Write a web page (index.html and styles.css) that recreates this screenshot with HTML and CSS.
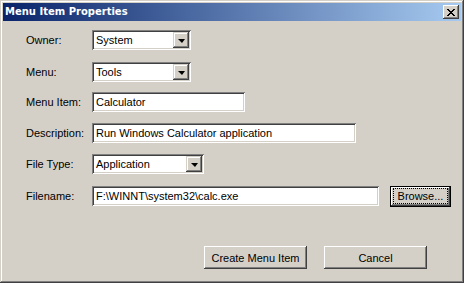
FILE: index.html
```html
<!DOCTYPE html>
<html>
<head>
	<title>Menu Item Properties</title>
	<meta charset=utf-8>
	<link rel="stylesheet" href="styles.css">
</head>
<body>
	<div class="dialog">
		<div class="titlebar">
			<span class="title">Menu Item Properties</span>
			<span class="close">
				<svg width="8" height="7" viewBox="0 0 8 7" shape-rendering="crispEdges">
					<path d="M0 0h2v1h-2zM6 0h2v1h-2zM1 1h2v1h-2zM5 1h2v1h-2zM2 2h4v1h-4zM3 3h2v1h-2zM2 4h4v1h-4zM1 5h2v1h-2zM5 5h2v1h-2zM0 6h2v1h-2zM6 6h2v1h-2z" fill="#000"/>
				</svg>
			</span>
		</div>

		<div class="form">
			<div class="row">
				<span class="label">Owner:</span>
				<div class="combo combo-owner">
					<span class="field-text">System</span>
					<span class="combo-btn"><span class="arrow"></span></span>
				</div>
			</div>
			<div class="row row-wide">
				<span class="label">Menu:</span>
				<div class="combo combo-owner">
					<span class="field-text">Tools</span>
					<span class="combo-btn"><span class="arrow"></span></span>
				</div>
			</div>
			<div class="row row-tight">
				<span class="label">Menu Item:</span>
				<div class="edit edit-item"><span class="field-text">Calculator</span></div>
			</div>
			<div class="row">
				<span class="label">Description:</span>
				<div class="edit edit-desc"><span class="field-text">Run Windows Calculator application</span></div>
			</div>
			<div class="row">
				<span class="label">File Type:</span>
				<div class="combo combo-type">
					<span class="field-text">Application</span>
					<span class="combo-btn"><span class="arrow"></span></span>
				</div>
			</div>
			<div class="row row-wide">
				<span class="label">Filename:</span>
				<div class="edit edit-file"><span class="field-text">F:\WINNT\system32\calc.exe</span></div>
				<span class="btn btn-default"><span class="focus">Browse...</span></span>
			</div>
		</div>

		<div class="actions">
			<span class="btn btn-wide">Create Menu Item</span>
			<span class="btn btn-wide">Cancel</span>
		</div>
	</div>
</body>
</html>
```

FILE: styles.css
```css
	body{
		margin: 0;
		font-family: "Liberation Sans", Arial, sans-serif;
		font-size: 11px;
		color: #000;
		background: #d4d0c8;
	}
	.dialog{
		width: 464px;
		height: 283px;
		box-sizing: border-box;
		padding: 3px;
		background: #d4d0c8;
		box-shadow: inset -1px -1px #404040, inset 1px 1px #d4d0c8,
			inset -2px -2px #808080, inset 2px 2px #fff;
	}
	.titlebar{
		height: 18px;
		display: flex;
		align-items: flex-start;
		justify-content: space-between;
		background: linear-gradient(to right, #0a246a, #a6caf0);
	}
	.title{
		color: #fff;
		font-family: "DejaVu Sans", Verdana, sans-serif;
		font-weight: bold;
		font-size: 10px;
		line-height: 18px;
		padding-left: 2px;
	}
	.close{
		width: 16px;
		height: 14px;
		margin: 2px 2px 0 0;
		display: flex;
		align-items: center;
		justify-content: center;
		background: #d4d0c8;
		box-shadow: inset -1px -1px #404040, inset 1px 1px #fff,
			inset -2px -2px #808080;
	}
	.close svg{
		display: block;
	}

	.form{
		padding: 9px 0 0 23px;
		display: flex;
		flex-direction: column;
		gap: 11px;
	}
	.row{
		display: flex;
		align-items: center;
		height: 20px;
	}
	.row-wide{ margin-top: 1px; }
	.row-tight{ margin-top: -1px; }
	.label{
		width: 66px;
		flex: none;
	}
	.field-text{
		white-space: nowrap;
		padding-left: 2px;
		flex: 1;
	}

	.edit, .combo{
		height: 20px;
		box-sizing: border-box;
		padding: 2px;
		background: #fff;
		display: flex;
		align-items: center;
		box-shadow: inset 1px 1px #808080, inset -1px -1px #fff,
			inset 2px 2px #404040, inset -2px -2px #d4d0c8;
	}
	.edit-item{ width: 153px; }
	.edit-desc{ width: 264px; }
	.edit-file{ width: 287px; }
	.combo-owner{ width: 99px; }
	.combo-type{ width: 112px; }

	.combo-btn{
		width: 16px;
		height: 16px;
		flex: none;
		display: flex;
		align-items: center;
		justify-content: center;
		background: #d4d0c8;
		box-shadow: inset -1px -1px #404040, inset 1px 1px #d4d0c8,
			inset -2px -2px #808080, inset 2px 2px #fff;
	}
	.arrow{
		width: 0;
		height: 0;
		border-left: 4px solid transparent;
		border-right: 3px solid transparent;
		border-top: 4px solid #000;
		margin-top: 1px;
	}

	.btn{
		box-sizing: border-box;
		display: flex;
		align-items: center;
		justify-content: center;
		background: #d4d0c8;
		box-shadow: inset -1px -1px #404040, inset 1px 1px #fff,
			inset -2px -2px #808080, inset 2px 2px #d4d0c8;
	}
	.btn-default{
		width: 61px;
		height: 21px;
		margin-left: 11px;
		border: 1px solid #000;
		box-shadow: inset -1px -1px #404040, inset 1px 1px #fff,
			inset -2px -2px #808080;
	}
	.focus{
		outline: 1px dotted #000;
		padding: 1px 4px 0 4px;
		line-height: 13px;
	}

	.actions{
		margin-top: 40px;
		padding-right: 34px;
		display: flex;
		justify-content: flex-end;
		gap: 17px;
	}
	.btn-wide{
		width: 103px;
		height: 23px;
	}
```
